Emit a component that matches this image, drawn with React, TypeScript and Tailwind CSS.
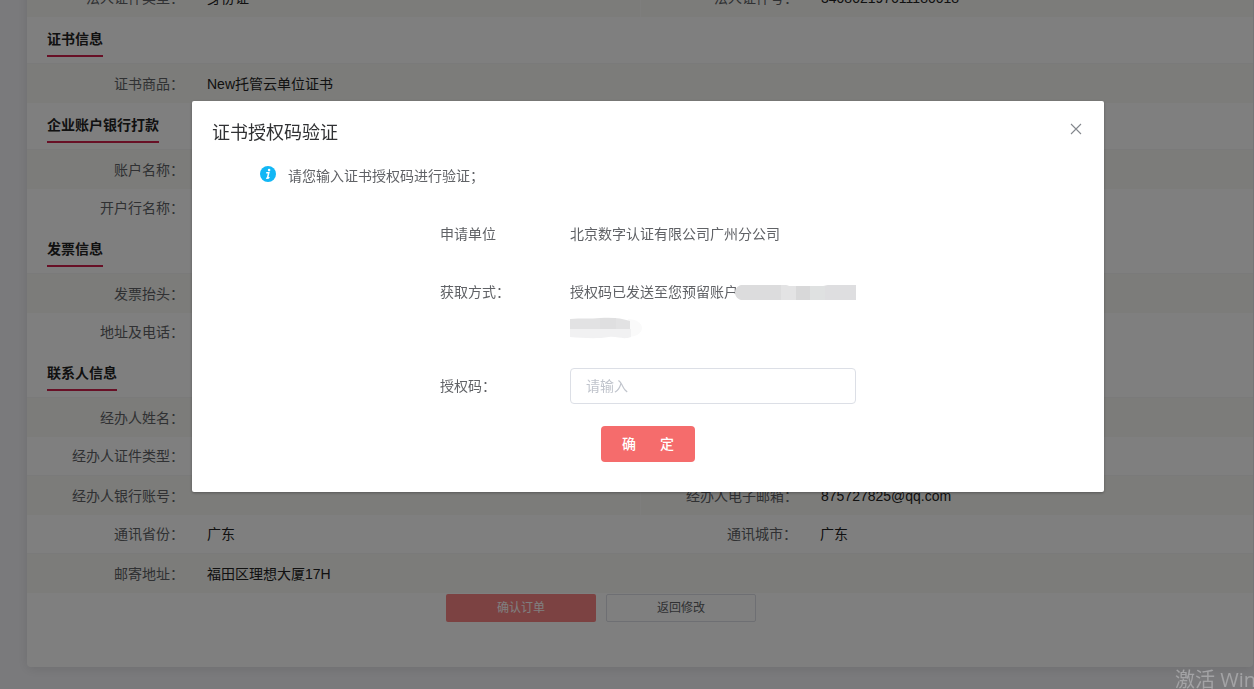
import React, { useState } from 'react';

interface Field {
  label: string;
  value?: string;
}

interface RowData {
  fields: Field[];
  shaded?: boolean;
}

interface SectionData {
  title?: string;
  rows: RowData[];
}

const sections: SectionData[] = [
  {
    rows: [
      {
        shaded: true,
        fields: [
          { label: '法人证件类型', value: '身份证' },
          { label: '法人证件号', value: '340802197611180018' }
        ]
      }
    ]
  },
  {
    title: '证书信息',
    rows: [{ shaded: true, fields: [{ label: '证书商品', value: 'New托管云单位证书' }] }]
  },
  {
    title: '企业账户银行打款',
    rows: [
      { shaded: true, fields: [{ label: '账户名称' }] },
      { fields: [{ label: '开户行名称' }] }
    ]
  },
  {
    title: '发票信息',
    rows: [
      { shaded: true, fields: [{ label: '发票抬头' }] },
      { fields: [{ label: '地址及电话' }] }
    ]
  },
  {
    title: '联系人信息',
    rows: [
      { shaded: true, fields: [{ label: '经办人姓名' }] },
      { fields: [{ label: '经办人证件类型' }] },
      {
        shaded: true,
        fields: [
          { label: '经办人银行账号' },
          { label: '经办人电子邮箱', value: '875727825@qq.com' }
        ]
      },
      {
        fields: [
          { label: '通讯省份', value: '广东' },
          { label: '通讯城市', value: '广东' }
        ]
      },
      { shaded: true, fields: [{ label: '邮寄地址', value: '福田区理想大厦17H' }] }
    ]
  }
];

const InfoRow: React.FC<{ row: RowData }> = ({ row }) => (
  <dl
    className={`grid grid-cols-2 ${
      row.shaded ? 'h-10 bg-[#f8f8f4] border-t border-[#f5f5f4] pt-px' : 'h-[38px]'
    }`}
  >
    {row.fields.map((field, i) => (
      <div
        key={field.label}
        className={`flex items-center ${i > 0 && row.shaded ? 'border-l border-[#fcfcfa]' : ''}`}
      >
        <dt className="w-[157px] shrink-0 text-right text-[#606266]">{field.label}：</dt>
        <dd className="pl-[23px] text-[#222]">{field.value}</dd>
      </div>
    ))}
  </dl>
);

const InfoSection: React.FC<{ section: SectionData }> = ({ section }) => (
  <section>
    {section.title && (
      <div className="h-[46px] px-5 flex items-start">
        <h2 className="h-10 pt-3 border-b-2 border-[#d0214c] leading-5 font-bold text-[#222]">
          {section.title}
        </h2>
      </div>
    )}
    {section.rows.map((row) => (
      <InfoRow key={row.fields[0].label} row={row} />
    ))}
  </section>
);

const InfoIcon = () => (
  <svg viewBox="0 0 16 16" className="w-4 h-4" aria-hidden="true">
    <circle cx="8" cy="8" r="8" fill="#12b7f5" />
    <circle cx="9.1" cy="4.1" r="1.3" fill="#fff" />
    <path
      d="M6.2 6.8h2.6L7.5 11.8M6.2 12.2c1.3.3 2.4-.1 3.1-1.1"
      fill="none"
      stroke="#fff"
      strokeWidth="1.5"
    />
  </svg>
);

const CloseIcon = () => (
  <svg viewBox="0 0 16 16" className="w-4 h-4" aria-hidden="true">
    <path d="M3 3l10 10M13 3L3 13" fill="none" stroke="#84878d" strokeWidth="1.1" />
  </svg>
);

// Account number hidden behind brush strokes
const MaskedLong = () => (
  <svg viewBox="0 0 121 16" className="w-[121px] h-4 shrink-0" aria-hidden="true">
    <path d="M6 1h44l4 1h34l6-1h27v15H6C-2 14-2 3 6 1z" fill="#dcdcdd" />
    <path d="M46 1h4l4 1h7v14H46z" fill="#e3e3e4" />
    <path d="M61 2h14v14H61z" fill="#d8d8d9" />
    <path d="M75 2h15v14H75z" fill="#dfe1e1" />
    <path d="M90 2l4-1h27v15H90z" fill="#dedee0" />
  </svg>
);

const MaskedShort = () => (
  <svg viewBox="0 0 74 22" className="w-[74px] h-[22px]" aria-hidden="true">
    <path d="M58 2c8 0 14 4 14 9s-6 9-14 9z" fill="#fafafa" />
    <path d="M0 12h61v8c-8 3-14-1-22 0-12 2-26 1-39 0z" fill="#f1f1f2" />
    <path d="M0 2c11-1 20 0 30-1 11-1 22 0 30 3v8H0z" fill="#e2e2e3" />
    <path d="M30 1h16v11H30z" fill="#dfdfe0" />
  </svg>
);

interface AuthDialogProps {
  onClose: () => void;
}

const AuthDialog: React.FC<AuthDialogProps> = ({ onClose }) => {
  const [code, setCode] = useState('');

  return (
    <div
      role="dialog"
      aria-modal="true"
      aria-labelledby="dialog-title"
      className="flex-1 self-start rounded-xs bg-white shadow-[0_1px_3px_rgba(0,0,0,0.3)] text-[#606266]"
    >
      <header className="flex items-start justify-between px-5 pt-5">
        <h1 id="dialog-title" className="text-lg leading-6 text-[#303133]">
          证书授权码验证
        </h1>
        <button type="button" aria-label="关闭" onClick={onClose} className="cursor-pointer">
          <CloseIcon />
        </button>
      </header>

      <p className="flex items-start gap-3 pl-[68px] pt-[21px] leading-5">
        <InfoIcon />
        请您输入证书授权码进行验证；
      </p>

      <form className="w-[416px] mx-auto py-[30px]" onSubmit={(e) => e.preventDefault()}>
        <div className="flex leading-9">
          <span className="w-[130px] shrink-0">申请单位</span>
          <span>北京数字认证有限公司广州分公司</span>
        </div>
        <div className="flex leading-9 pt-[22px]">
          <span className="w-[130px] shrink-0">获取方式：</span>
          <div className="flex-1">
            <div className="flex items-center">
              <span className="w-[165px] shrink-0 whitespace-nowrap">授权码已发送至您预留账户</span>
              <MaskedLong />
            </div>
            <div className="flex items-center h-9">
              <MaskedShort />
            </div>
          </div>
        </div>
        <div className="flex leading-9 pt-[22px]">
          <label htmlFor="auth-code" className="w-[130px] shrink-0">
            授权码：
          </label>
          <input
            id="auth-code"
            type="text"
            value={code}
            onChange={(e) => setCode(e.target.value)}
            placeholder="请输入"
            className="flex-1 h-9 px-[15px] rounded-sm border border-[#dcdfe6] placeholder:text-[#c0c4cc] outline-none"
          />
        </div>
        <div className="flex justify-center pt-[22px]">
          <button
            type="submit"
            className="flex w-[94px] h-9 items-center justify-between px-[21px] rounded-sm bg-[#f56c6c] font-medium text-white cursor-pointer"
          >
            <span>确</span>
            <span>定</span>
          </button>
        </div>
      </form>
    </div>
  );
};

export default function App() {
  const [open, setOpen] = useState(true);

  return (
    <div className="relative h-screen overflow-hidden bg-[#f5f5f9] pl-[27px] pr-px text-sm font-['Liberation_Sans','Noto_Sans_CJK_SC',sans-serif]">
      {/* page is scrolled so that the first row is partly out of view */}
      <main className="-mt-[23px] pb-[45px] rounded-sm bg-white shadow-[0_2px_12px_rgba(0,0,0,0.1)]">
        {sections.map((section, i) => (
          <InfoSection key={section.title ?? i} section={section} />
        ))}
        <div className="flex justify-center gap-2.5 pt-px pr-[78px] text-xs">
          <button
            type="button"
            onClick={() => setOpen(true)}
            className="w-[150px] h-7 rounded-xs bg-[#f98585] text-white"
          >
            确认订单
          </button>
          <button
            type="button"
            className="w-[150px] h-7 rounded-xs border border-[#dcdfe6] bg-white text-[#606266]"
          >
            返回修改
          </button>
        </div>
      </main>

      {open && (
        <div className="fixed inset-0 flex bg-black/50 pt-[101px] pl-48 pr-[150px]">
          <AuthDialog onClose={() => setOpen(false)} />
        </div>
      )}

      <div className="pointer-events-none fixed left-[1175px] top-[668px] whitespace-nowrap text-xl leading-6 text-[#a3a3a5] font-['Open_Sans','Noto_Sans_CJK_SC',sans-serif]">
        激活 Windows
      </div>
    </div>
  );
}
